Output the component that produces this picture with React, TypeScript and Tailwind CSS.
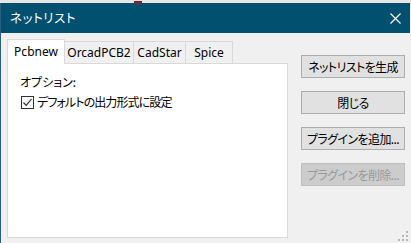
import React from 'react';

const tabs = [
  { name: 'Pcbnew', w: 'w-[58px]', active: true },
  { name: 'OrcadPCB2', w: 'w-[70px]', active: false },
  { name: 'CadStar', w: 'w-[53px]', active: false },
  { name: 'Spice', w: 'w-[48px]', active: false },
];

const buttons = [
  { label: 'ネットリストを生成', disabled: false },
  { label: '閉じる', disabled: false },
  { label: 'プラグインを追加...', disabled: false },
  { label: 'プラグインを削除...', disabled: true },
];

const Grip = () => (
  <svg className="absolute right-[3px] bottom-[2px]" width="10" height="10" viewBox="0 0 10 10">
    <rect x="8" y="0" width="2" height="2" fill="#b8b8b8" />
    <rect x="4" y="4" width="2" height="2" fill="#b8b8b8" />
    <rect x="8" y="4" width="2" height="2" fill="#b8b8b8" />
    <rect x="0" y="8" width="2" height="2" fill="#b8b8b8" />
    <rect x="4" y="8" width="2" height="2" fill="#b8b8b8" />
    <rect x="8" y="8" width="2" height="2" fill="#b8b8b8" />
  </svg>
);

export default function App() {
  return (
    <div className="relative w-[411px] h-[243px] overflow-hidden bg-[#f0f0f0] text-[12px] text-black font-['Segoe_UI','Noto_Sans','Noto_Sans_CJK_JP',sans-serif]">
      <div className="relative h-[3px] bg-[#e6e6e6]">
        <div className="absolute left-[134px] top-[1px] w-[8px] h-[2px] bg-[#a31515]" />
      </div>
      <div className="h-[240px] border-l border-[#2a5f82]">
        <div className="h-[30px] mr-[1px] bg-[#01506f] flex items-center justify-between pl-[9px] pr-[9px]">
          <span className="text-white text-[12.5px] whitespace-nowrap tracking-[0.6px] [font-feature-settings:'palt'] font-['Noto_Sans_CJK_JP',sans-serif]">
            ネットリスト
          </span>
          <svg width="11" height="11" viewBox="0 0 11 11">
            <path d="M0.5 0.5 L10.5 10.5 M10.5 0.5 L0.5 10.5" stroke="#ffffff" strokeWidth="1.2" />
          </svg>
        </div>
        <div className="flex pl-[6px] pt-[6px]">
          <div className="w-[281px]">
            <div className="flex items-end h-[24px]">
              {tabs.map((t) =>
                t.active ? (
                  <div
                    key={t.name}
                    className={`${t.w} relative z-10 h-[25px] -mb-px bg-white border border-b-0 border-[#d9d9d9] flex items-center justify-center pb-[1px]`}
                  >
                    {t.name}
                  </div>
                ) : (
                  <div
                    key={t.name}
                    className={`${t.w} -ml-px h-[22px] bg-[#f0f0f0] border border-b-0 border-[#d9d9d9] flex items-center justify-center`}
                  >
                    {t.name}
                  </div>
                )
              )}
            </div>
            <div className="h-[175px] bg-white border border-[#d9d9d9] pl-[12px] pt-[9px] font-['Noto_Sans_CJK_JP',sans-serif] [font-feature-settings:'palt']">
              <div className="leading-[18px]">オプション:</div>
              <div className="flex items-center mt-[2px] h-[18px]">
                <div className="w-[13px] h-[13px] border border-[#333333] bg-white flex items-center justify-center ml-[1px]">
                  <svg width="11" height="11" viewBox="0 0 11 11">
                    <path d="M1.5 5.5 L4.2 8.3 L9.5 2.2" stroke="#333333" strokeWidth="1.2" fill="none" />
                  </svg>
                </div>
                <span className="ml-[3px] whitespace-nowrap tracking-[-0.9px]">デフォルトの出力形式に設定</span>
              </div>
            </div>
          </div>
          <div className="ml-[13px] pt-[16px] flex flex-col gap-[13px]">
            {buttons.map((b) => (
              <div
                key={b.label}
                className={`w-[104px] h-[23px] flex items-center justify-center border whitespace-nowrap tracking-[-0.6px] [font-feature-settings:'palt'] font-['Noto_Sans_CJK_JP',sans-serif] ${
                  b.disabled
                    ? 'bg-[#cccccc] border-[#bfbfbf] text-[#999999]'
                    : 'bg-[#e1e1e1] border-[#adadad] text-black'
                }`}
              >
                {b.label}
              </div>
            ))}
          </div>
        </div>
      </div>
      <Grip />
    </div>
  );
}
